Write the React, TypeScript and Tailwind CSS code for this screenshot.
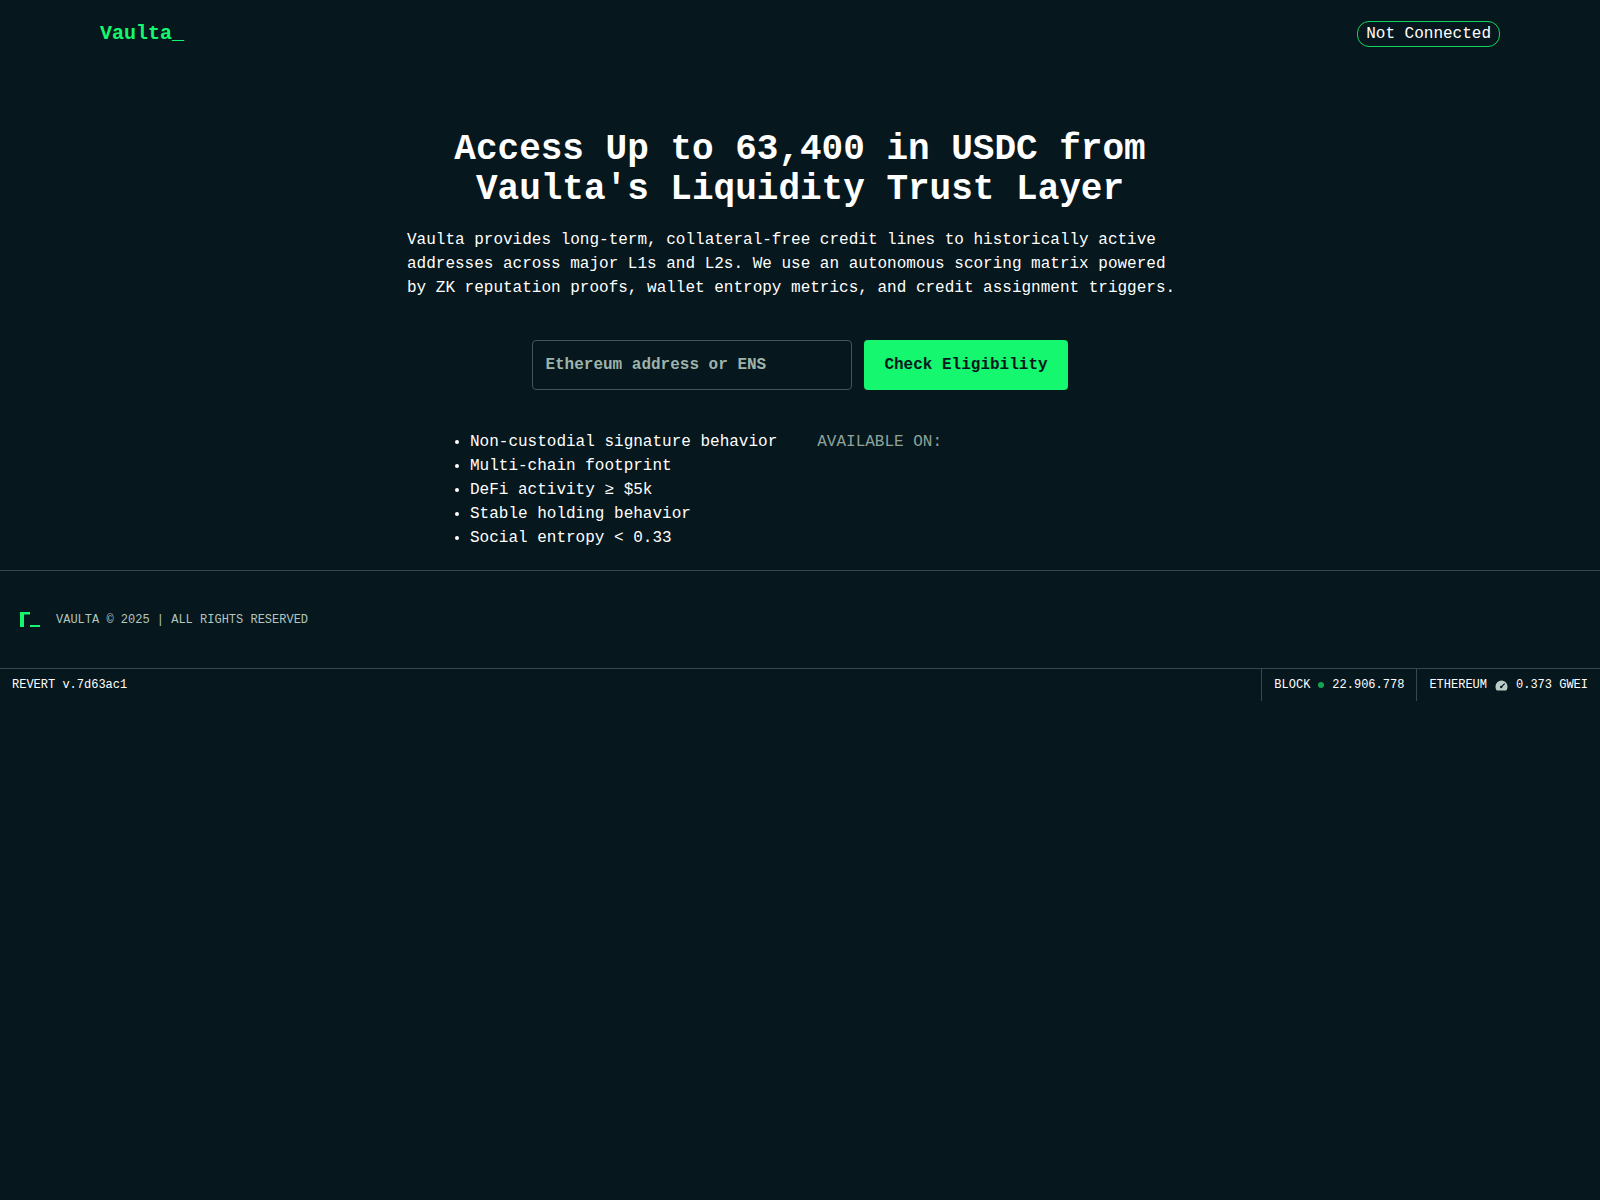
const requirements = [
  "Non-custodial signature behavior",
  "Multi-chain footprint",
  "DeFi activity ≥ $5k",
  "Stable holding behavior",
  "Social entropy < 0.33",
];

const Header = () => {
  return (
    <header className="flex items-center justify-between max-w-[1400px] w-full mx-auto py-5">
      <a href="#" className="text-xl font-bold text-[#14f76e]">
        Vaulta_
      </a>
      <button type="button" className="border border-[#0fd75e] rounded-xl px-2">
        Not Connected
      </button>
    </header>
  );
};

const Hero = () => {
  return (
    <main className="flex flex-col items-center pt-[62px] pb-5">
      <h1 className="text-4xl font-bold text-center max-w-[786px]">
        Access Up to 63,400 in USDC from Vaulta's Liquidity Trust Layer
      </h1>
      <p className="mt-[18px] max-w-[786px]">
        Vaulta provides long-term, collateral-free credit lines to historically active addresses across major L1s and L2s. We use an autonomous scoring matrix powered by ZK reputation proofs, wallet entropy metrics, and credit assignment triggers.
      </p>
      <form className="flex gap-3 mt-10 font-bold">
        <input
          type="text"
          aria-label="Ethereum address or ENS"
          placeholder="Ethereum address or ENS"
          className="w-80 px-3 py-3 border border-[#45545a] rounded placeholder:text-[#9eb3a9]"
        />
        <button type="button" className="px-5 rounded bg-[#14f76e] text-[#06171d]">
          Check Eligibility
        </button>
      </form>
      <div className="flex gap-10 w-full max-w-[700px] mt-10">
        <ul className="list-disc pl-5">
          {requirements.map((item) => (
            <li key={item}>{item}</li>
          ))}
        </ul>
        <p className="text-[#8fa39b]">AVAILABLE ON:</p>
      </div>
    </main>
  );
};

const Footer = () => {
  return (
    <footer className="text-xs">
      <div className="flex items-center gap-4 px-5 py-10 border-t border-[#3a484d]">
        <svg className="w-5 h-[17px]" viewBox="0 0 20 17" fill="#14f76e">
          <path d="M0 1h10v2.6H4V16H0z" />
          <path d="M10 14h10v2H10z" />
        </svg>
        <span className="text-[#b3c6bd]">VAULTA © 2025 | ALL RIGHTS RESERVED</span>
      </div>
      <div className="flex border-t border-[#3a484d]">
        <div className="flex-1 px-3 py-2">REVERT v.7d63ac1</div>
        <div className="flex items-center gap-2 px-3 border-l border-[#3a484d]">
          <span>BLOCK</span>
          <span className="size-1.5 rounded-full bg-[#13a351]" />
          <span>22.906.778</span>
        </div>
        <div className="flex items-center gap-2 px-3 border-l border-[#3a484d]">
          <span>ETHEREUM</span>
          <svg className="size-[13px]" viewBox="0 0 13 13" fill="none">
            <path
              d="M6.5 1.5A6 6 0 0 0 .5 7.5c0 1.2.2 2.3.7 3.2.2.5.6.8 1.1.8h8.4c.5 0 .9-.3 1.1-.8.5-.9.7-2 .7-3.2a6 6 0 0 0-6-6z"
              fill="#b9cbc2"
            />
            <path d="M9.4 4.8 6.4 7.8" stroke="#06171d" strokeWidth="1.2" strokeLinecap="round" />
            <circle cx="6.2" cy="8" r="1.2" fill="#06171d" />
          </svg>
          <span>0.373 GWEI</span>
        </div>
      </div>
    </footer>
  );
};

export default function App() {
  return (
    <div className="min-h-screen bg-[#06171d] text-white font-['Liberation_Mono',monospace]">
      <Header />
      <Hero />
      <Footer />
    </div>
  );
}
